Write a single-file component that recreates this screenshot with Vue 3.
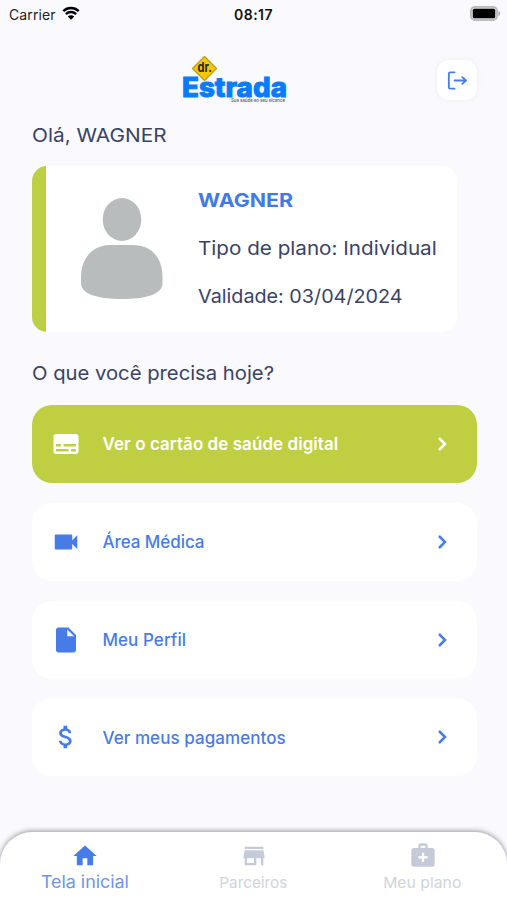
<script setup>
const actions = [
  { label: 'Ver o cartão de saúde digital', icon: 'card', primary: true },
  { label: 'Área Médica', icon: 'video' },
  { label: 'Meu Perfil', icon: 'file' },
  { label: 'Ver meus pagamentos', icon: 'money' },
]
const paths = {
  card: 'M20 4H4c-1.1 0-2 .9-2 2v12c0 1.1.9 2 2 2h16c1.1 0 2-.9 2-2V6c0-1.1-.9-2-2-2zM4 12h4v2H4v-2zm10 6H4v-2h10v2zm6 0h-4v-2h4v2zm0-4H10v-2h10v2z',
  video: 'M17 10.500V7c0-.55-.45-1-1-1H4c-.55 0-1 .45-1 1v10c0 .55.45 1 1 1h12c.55 0 1-.45 1-1v-3.500l4 4v-11l-4 4z',
  file: 'M6 2c-1.100 0-2 .9-2 2v16c0 1.100.9 2 2 2h12c1.100 0 2-.9 2-2V8l-6-6H6zm7 7V3.500L18.500 9H13z',
  money: 'M11.800 10.900c-2.270-.59-3-1.200-3-2.150 0-1.090 1.010-1.850 2.700-1.850 1.780 0 2.440.85 2.500 2.100h2.210c-.07-1.720-1.120-3.300-3.210-3.810V3h-3v2.160c-1.940.42-3.500 1.680-3.500 3.610 0 2.310 1.910 3.460 4.700 4.130 2.500.6 3 1.480 3 2.410 0 .69-.49 1.790-2.700 1.790-2.060 0-2.870-.92-2.980-2.100h-2.200c.12 2.190 1.760 3.420 3.680 3.830V21h3v-2.150c1.950-.37 3.500-1.500 3.500-3.550 0-2.840-2.430-3.810-4.700-4.400z',
}
const tabs = [
  { id: 'home', label: 'Tela inicial', path: 'M10 20v-6h4v6h5v-8h3L12 3 2 12h3v8z', active: true },
  { id: 'store', label: 'Parceiros', path: 'M20 4H4v2h16V4zm1 10v-2l-1-5H4l-1 5v2h1v6h10v-6h4v6h2v-6h1zm-9 4H6v-4h6v4z' },
  { id: 'health', label: 'Meu plano', path: 'M20 6h-4V4c0-1.100-.9-2-2-2h-4c-1.100 0-2 .9-2 2v2H4c-1.100 0-2 .9-2 2v12c0 1.100.9 2 2 2h16c1.100 0 2-.9 2-2V8c0-1.100-.9-2-2-2zM10 4h4v2h-4V4zm6 11h-3v3h-2v-3H8v-2h3v-3h2v3h3v2z' },
]
</script>

<template>
  <div class="screen">
    <div class="status">
      <div class="carrier">
        <span>Carrier</span>
        <svg class="wifi" viewBox="0 0 18 14">
          <path d="M1.300 5.100a11 11 0 0 1 15.400 0M3.900 8.100a7.200 7.200 0 0 1 10.200 0" fill="none" stroke="#000" stroke-width="2.400" />
          <path d="M5.800 10.500a4.600 4.600 0 0 1 6.400 0L9 13.700z" />
        </svg>
      </div>
      <span class="clock">08:17</span>
      <svg class="battery" viewBox="0 0 31 15">
        <rect x=".9" y=".9" width="26.200" height="13.200" rx="4" fill="#ddd" stroke="#b9b9bd" stroke-width="1.800" />
        <rect x="2.800" y="2.800" width="22.400" height="9.400" rx="1.500" />
        <path d="M28.500 5c2.300.5 2.300 4.500 0 5z" fill="#aaa" />
      </svg>
    </div>

    <header class="header">
      <svg class="logo" viewBox="0 0 110 52">
        <text class="brand" x="2" y="41.500" textLength="105" lengthAdjust="spacingAndGlyphs">Estrada</text>
        <path d="M24.500 1.500 36.500 13.500 24.500 25.500 12.500 13.500z" fill="#f6c70c" stroke="#c09b0c" stroke-width="1.200" stroke-linejoin="round" />
        <text class="doctor" x="17.500" y="17" textLength="14.500" lengthAdjust="spacingAndGlyphs">dr.</text>
        <text class="slogan" x="51" y="47.300" textLength="54" lengthAdjust="spacingAndGlyphs">Sua saúde ao seu alcance</text>
      </svg>
      <button class="logout" aria-label="Sair">
        <svg viewBox="0 0 24 24" fill="none" stroke="#477de7" stroke-width="1.900" stroke-linecap="round" stroke-linejoin="round">
          <path d="M10 3.500H5.500Q4 3.500 4 5v14Q4 20.500 5.500 20.500H10M10 12h12M18 8.500 22 12l-4 3.500" />
        </svg>
      </button>
    </header>

    <main class="content">
      <p class="greeting wide">Olá, WAGNER</p>
      <section class="profile">
        <svg class="avatar" viewBox="0 0 84 104">
          <ellipse cx="42" cy="22.500" rx="19.300" ry="21.500" />
          <path d="M30 48h23c18 0 29 12 29.500 31v7c0 12-18 16-40.500 16S1 98 1 86v-6c0-18 11-32 29-32z" />
        </svg>
        <div class="details">
          <strong class="wide">WAGNER</strong>
          <span class="plan wide">Tipo de plano: Individual</span>
          <span class="validity wide">Validade: 03/04/2024</span>
        </div>
      </section>
      <h2 class="question wide">O que você precisa hoje?</h2>
      <nav class="actions">
        <button v-for="a in actions" :key="a.icon" class="action" :class="{ primary: a.primary }">
          <svg class="icon" viewBox="0 0 24 24"><path :d="paths[a.icon]" /></svg>
          <span class="label" :class="a.icon">{{ a.label }}</span>
          <svg class="chevron" viewBox="0 0 12 16"><path d="m2 2 6 6-6 6" /></svg>
        </button>
      </nav>
    </main>

    <nav class="tabs">
      <div v-for="t in tabs" :key="t.id" class="tab" :class="[t.id, { active: t.active }]">
        <svg viewBox="0 0 24 24"><path :d="t.path" /></svg>
        <span>{{ t.label }}</span>
      </div>
    </nav>
  </div>
</template>

<style>
body { margin: 0; background: #f9f9fe; }
</style>

<style scoped>
* { box-sizing: border-box; }
.screen { width: 507px; height: 900px; display: flex; flex-direction: column; overflow: hidden; background: #f9f9fe; color: #3a4366; font-family: Inter, sans-serif; }
svg { display: block; flex: none; }
button { border: 0; margin: 0; font: inherit; }
.wide { width: max-content; transform-origin: left center; }
.status { height: 28px; flex: none; display: grid; grid-template-columns: 1fr auto 1fr; align-items: center; padding: 0 6px 0 9px; color: #222; font-size: 14px; }
.carrier { display: flex; align-items: center; gap: 6px; letter-spacing: .1px; }
.wifi { width: 18px; height: 14px; margin-top: -2px; }
.clock { margin-left: -3px; font-weight: 600; letter-spacing: .45px; color: #111; }
.battery { width: 31px; height: 15px; justify-self: end; margin-top: -2px; }
.header { height: 80px; flex: none; display: grid; grid-template-columns: 1fr 110px 1fr; align-items: start; padding: 27px 30px 0 0; }
.logo { grid-column: 2; width: 110px; height: 52px; margin-left: -4px; overflow: visible; }
.brand { font: 800 27px Inter, sans-serif; fill: #087cfa; stroke: #087cfa; stroke-width: .9; }
.doctor { font: 700 13px Inter, sans-serif; fill: #272713; }
.slogan { font: 500 4.500px Inter, sans-serif; fill: #55555e; }
.logout { justify-self: end; width: 40px; height: 40px; margin-top: 5px; padding: 8px; border-radius: 12px; background: #fff; box-shadow: 0 0 4px #dedee880; }
.logout svg { width: 23px; height: 23px; }
.content { padding: 0 30px 0 32px; }
.greeting { margin: 15px 0 0; height: 25px; line-height: 25px; font-size: 19px; transform: scaleX(1.095); }
.profile { width: 425px; height: 166px; margin-top: 18px; padding-left: 14px; display: flex; align-items: flex-start; border-radius: 15px; background: linear-gradient(90deg, #bdd043 14px, #fff 14px); }
.avatar { width: 84px; height: 104px; margin: 31px 0 0 34px; fill: #b9bcbd; }
.details { margin: 21px 0 0 33.500px; display: flex; flex-direction: column; gap: 20px; font-size: 19px; line-height: 28px; white-space: nowrap; }
.details strong { color: #4279e8; font-weight: 700; transform: scaleX(1.125); }
.plan { transform: scaleX(1.087); }
.validity { transform: scaleX(1.04); }
.question { margin: 29px 0 0; height: 26px; line-height: 26px; font-size: 19px; font-weight: 400; transform: scaleX(1.065); }
.actions { display: flex; flex-direction: column; gap: 19.800px; margin-top: 18px; }
.action { width: 445px; height: 78px; padding: 0 27px 0 19px; display: flex; align-items: center; border-radius: 20px; background: #fff; color: #477ce8; text-align: left; }
.primary { background: #c0cf41; color: #fff; }
.icon { width: 30px; height: 30px; fill: currentColor; }
.label { flex: 1; margin-left: 21.500px; font-size: 17px; font-weight: 500; letter-spacing: .06px; white-space: nowrap; }
.video { letter-spacing: -.06px; }
.icon + .money { padding-top: 1px; }
.primary .label { font-weight: 600; letter-spacing: .05px; }
.chevron { width: 12px; height: 16px; margin-right: 1px; fill: none; stroke: currentColor; stroke-width: 2.500; }
.tabs { margin-top: auto; flex: none; height: 68px; display: grid; grid-template-columns: repeat(3, 1fr); border-radius: 32px 32px 0 0; background: #fff; box-shadow: 0 -1px 5px #5559; }
.tab { display: flex; flex-direction: column; align-items: center; padding-top: 10px; color: #d0d3dc; font-size: 15px; white-space: nowrap; }
.tab svg { width: 28px; height: 28px; fill: #c5cad8; }
.tab span { height: 22px; line-height: 22px; margin-top: 2px; transform: scaleX(1.02); }
.health { padding-top: 9px; }
.health span { margin-top: 3px; transform: scaleX(1.05); }
.tab.active { color: #6e94ed; font-size: 17px; }
.tab.active svg { fill: #477ce8; }
.tab.active span { margin-top: 1px; transform: scaleX(1.05); }
</style>
